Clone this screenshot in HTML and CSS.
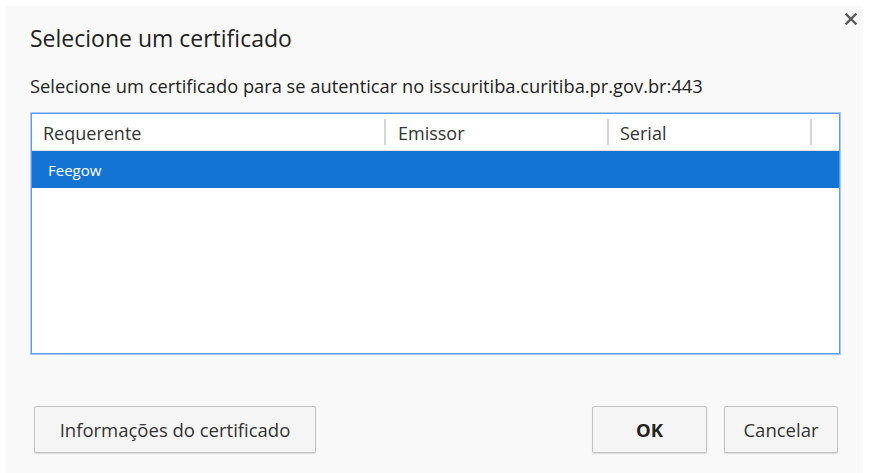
FILE: index.html
```html
<!DOCTYPE html>
<html lang="pt">
<head>
<meta charset="utf-8">
<title>Selecione um certificado</title>
<link rel="stylesheet" href="styles.css">
</head>
<body>
<div class="dialog">
  <button class="close" aria-label="Fechar">
    <svg width="12" height="12" viewBox="0 0 12 12"><path d="M1.5 1.5 L10.5 10.5 M10.5 1.5 L1.5 10.5" stroke="#5a5a5a" stroke-width="2.4" stroke-linecap="square"/></svg>
  </button>
  <div class="title">Selecione um certificado</div>
  <div class="desc">Selecione um certificado para se autenticar no isscuritiba.curitiba.pr.gov.br:443</div>
  <div class="table">
    <div class="table-inner">
      <div class="thead">
        <div class="th c1">Requerente</div>
        <div class="sep"></div>
        <div class="th c2">Emissor</div>
        <div class="sep"></div>
        <div class="th c3">Serial</div>
        <div class="sep"></div>
        <div class="th c4"></div>
      </div>
      <div class="row selected">
        <div class="td">Feegow</div>
      </div>
    </div>
  </div>
  <div class="actions">
    <button class="btn info">Informações do certificado</button>
    <div class="spacer"></div>
    <button class="btn ok">OK</button>
    <button class="btn cancel">Cancelar</button>
  </div>
</div>
</body>
</html>
```

FILE: styles.css
```css
* { box-sizing: border-box; }
html, body { margin: 0; padding: 0; background: #ffffff; }
body {
  font-family: "Open Sans", "Noto Sans", sans-serif;
  color: #333333;
  overflow: hidden;
}
.dialog {
  position: relative;
  margin: 6px 0 0 6px;
  width: 857px;
  height: 467px;
  background: #f9f9f9;
  padding: 17px 22px 0 24px;
}
.close {
  position: absolute;
  top: 7px;
  right: 6px;
  width: 12px;
  height: 12px;
  padding: 0;
  border: 0;
  background: transparent;
  display: block;
}
.close svg { display: block; }
.title {
  font-size: 23px;
  line-height: 30px;
  height: 30px;
  color: #222222;
  white-space: nowrap;
}
.desc {
  margin-top: 21px;
  font-size: 18.3px;
  line-height: 24px;
  height: 24px;
  color: #222222;
  white-space: nowrap;
}
.table {
  margin-top: 14px;
  height: 243px;
  border: 1px solid #a8c9f6;
  background: #ffffff;
}
.table-inner {
  height: 100%;
  border: 1px solid #5d9cf3;
  background: #ffffff;
}
.thead {
  display: flex;
  align-items: center;
  height: 37px;
  border-bottom: 1px solid #e2e2e2;
  font-size: 18px;
  color: #333333;
}
.th {
  line-height: 35px;
  padding-top: 2px;
  white-space: nowrap;
}
.c1 { width: 352px; padding-left: 11px; }
.c2 { width: 221px; padding-left: 12px; }
.c3 { width: 201px; padding-left: 11px; }
.c4 { flex: 1; }
.sep {
  width: 2px;
  height: 26px;
  background: #d6d6d6;
  flex: none;
}
.row {
  height: 37px;
  display: flex;
  align-items: center;
}
.selected {
  background: #1374d4;
  color: #ffffff;
}
.td {
  padding-left: 16px;
  font-size: 15px;
}
.actions {
  display: flex;
  margin-top: 51px;
  padding: 0 3px 0 4px;
  gap: 17px;
}
.spacer { flex: 1; }
.btn {
  height: 47px;
  border: 1px solid #c3c3c3;
  border-radius: 2px;
  background: #f5f5f5;
  box-shadow: 0 1px 1px rgba(0,0,0,0.12);
  font-family: "Open Sans", "Noto Sans", sans-serif;
  font-size: 18.5px;
  color: #333333;
  padding: 0;
}
.info { width: 282px; }
.ok { width: 115px; font-weight: 700; color: #222222; }
.cancel { width: 114px; }
```
